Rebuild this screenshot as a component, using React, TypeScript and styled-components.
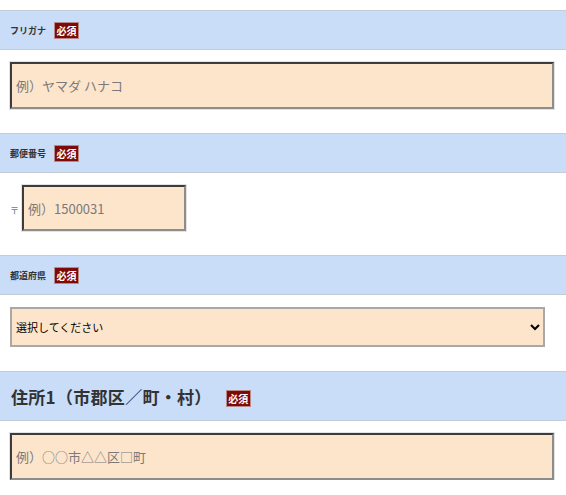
import React from "react";
import styled, { createGlobalStyle } from "styled-components";

const Global = createGlobalStyle`
  html, body { margin: 0; padding: 0; background: #fff; }
  body { font-family: "Noto Sans CJK JP", "Noto Sans", sans-serif; color: #333; }
  * { box-sizing: border-box; }
`;

const Page = styled.div`
  width: 566px;
  padding-top: 10px;
  display: flex;
  flex-direction: column;
  gap: 24px;
`;

const Field = styled.section`
  display: flex;
  flex-direction: column;
`;

const Header = styled.div<{ $large?: boolean }>`
  height: ${(p) => (p.$large ? 50 : 40)}px;
  background: #c9dcf8;
  border-top: 1px solid #c6ccd6;
  border-bottom: 1px solid #c6ccd6;
  display: flex;
  align-items: center;
  padding-left: ${(p) => (p.$large ? 11 : 10)}px;
  gap: ${(p) => (p.$large ? 14 : 8)}px;
`;

const Label = styled.span<{ $large?: boolean }>`
  font-size: ${(p) => (p.$large ? 17 : 9)}px;
  font-weight: 700;
  color: #333;
  letter-spacing: ${(p) => (p.$large ? 0.3 : 0)}px;
`;

const Badge = styled.span<{ $drop?: boolean }>`
  display: inline-flex;
  align-items: center;
  justify-content: center;
  width: 25px;
  height: 17px;
  margin-top: ${(p) => (p.$drop ? 5 : 0)}px;
  background: #7d0a06;
  border: 1px solid #b58a88;
  color: #fff;
  font-size: 10px;
  font-weight: 700;
`;

const Body = styled.div`
  padding: 12px 12px 0 10px;
  display: flex;
  align-items: center;
`;

const TextInput = styled.input<{ $w?: number; $h?: number }>`
  width: ${(p) => (p.$w ? `${p.$w}px` : "100%")};
  height: ${(p) => p.$h ?? 46}px;
  background: #fde5cc;
  border-style: solid;
  border-width: 2px;
  border-color: #3c3c3c #8d8d8d #8d8d8d #3c3c3c;
  outline: 1px solid #e3e3e3;
  padding: 0 4px;
  font-family: "Noto Sans CJK JP", sans-serif;
  font-size: 13px;
  color: #333;
  &::placeholder { color: #7a7a7a; }
`;

const Postal = styled.span`
  font-size: 9px;
  color: #6a7a8a;
  width: 12px;
  margin-top: 4px;
`;

const Select = styled.select`
  width: 535px;
  height: 40px;
  background-color: #fde5cc;
  border: 2px solid #a8a8a8;
  border-radius: 0;
  font-family: "Noto Sans CJK JP", sans-serif;
  font-size: 11px;
  color: #000;
  padding: 0;
`;

export default function App() {
  return (
    <>
      <Global />
      <Page>
        <Field>
          <Header>
            <Label>フリガナ</Label>
            <Badge>必須</Badge>
          </Header>
          <Body>
            <TextInput $h={47} placeholder="例）ヤマダ ハナコ" />
          </Body>
        </Field>
        <Field>
          <Header>
            <Label>郵便番号</Label>
            <Badge>必須</Badge>
          </Header>
          <Body>
            <Postal>〒</Postal>
            <TextInput $w={164} placeholder="例）1500031" />
          </Body>
        </Field>
        <Field>
          <Header>
            <Label>都道府県</Label>
            <Badge>必須</Badge>
          </Header>
          <Body>
            <Select defaultValue="">
              <option value="">選択してください</option>
              <option value="tokyo">東京都</option>
            </Select>
          </Body>
        </Field>
        <Field>
          <Header $large>
            <Label $large>住所1（市郡区／町・村）</Label>
            <Badge $drop>必須</Badge>
          </Header>
          <Body>
            <TextInput $h={47} placeholder="例）○○市△△区□町" />
          </Body>
        </Field>
      </Page>
    </>
  );
}
